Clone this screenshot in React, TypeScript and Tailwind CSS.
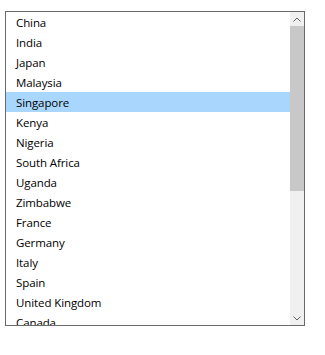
import React from "react";

const countries = [
  "China",
  "India",
  "Japan",
  "Malaysia",
  "Singapore",
  "Kenya",
  "Nigeria",
  "South Africa",
  "Uganda",
  "Zimbabwe",
  "France",
  "Germany",
  "Italy",
  "Spain",
  "United Kingdom",
  "Canada",
];

export default function App() {
  return (
    <div className="w-[325px] h-[355px] bg-white pt-[11px] pl-[5px]">
      <div
        className="w-[300px] h-[315px] border border-[#6a6a6a] flex overflow-hidden"
        style={{ fontFamily: '"Open Sans", "Noto Sans", sans-serif' }}
      >
        <div className="flex-1 overflow-hidden">
          {countries.map((c) => (
            <div
              key={c}
              className={
                c === "Singapore"
                  ? "h-[20px] pt-[2px] leading-[18px] pl-[10px] text-[11.5px] tracking-[-0.1px] text-black bg-[#a8d6fc] whitespace-nowrap"
                  : "h-[20px] pt-[2px] leading-[18px] pl-[10px] text-[11.5px] tracking-[-0.1px] text-black whitespace-nowrap"
              }
            >
              {c}
            </div>
          ))}
        </div>
        <div className="w-[14px] bg-[#f0f0f0] flex flex-col">
          <div className="h-[14px] flex items-center justify-center">
            <svg width="8" height="5" viewBox="0 0 8 5">
              <path d="M0.5 4.5 L4 1 L7.5 4.5" stroke="#606060" strokeWidth="1" fill="none" />
            </svg>
          </div>
          <div className="h-[165px] bg-[#c8c8c8]" />
          <div className="flex-1" />
          <div className="h-[14px] flex items-center justify-center">
            <svg width="8" height="5" viewBox="0 0 8 5">
              <path d="M0.5 0.5 L4 4 L7.5 0.5" stroke="#606060" strokeWidth="1" fill="none" />
            </svg>
          </div>
        </div>
      </div>
    </div>
  );
}
